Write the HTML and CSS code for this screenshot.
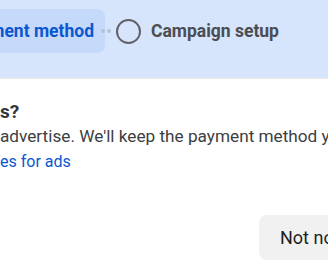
FILE: index.html
```html
<!DOCTYPE html>
<html lang="en">
<head>
<meta charset="utf-8">
<title>Payment setup</title>
<link rel="stylesheet" href="styles.css">
</head>
<body>
  <header class="header">
    <div class="stepper">
      <div class="step step-active">
        <span class="step-label">Payment method</span>
      </div>
      <div class="connector"><span class="dot"></span><span class="dot"></span></div>
      <div class="step">
        <span class="step-circle"></span>
        <span class="step-label step-label-muted">Campaign setup</span>
      </div>
    </div>
  </header>
  <main class="content">
    <h2 class="title">s?</h2>
    <p class="text">advertise. We'll keep the payment method you</p>
    <a class="link" href="#">es for ads</a>
    <div class="actions">
      <button class="btn" type="button">Not now</button>
    </div>
  </main>
</body>
</html>
```
FILE: styles.css
```css
html, body {
  margin: 0;
  padding: 0;
  overflow: hidden;
  background: #ffffff;
  font-family: Roboto, "Noto Sans", Arial, sans-serif;
}

.header {
  height: 78px;
  background: #d6e4fc;
  box-shadow: 0 1px 1px rgba(0, 0, 0, 0.08);
  box-sizing: border-box;
  padding-top: 9px;
}

.stepper {
  display: flex;
  align-items: center;
  margin-left: -56px;
  white-space: nowrap;
}

.step {
  display: flex;
  align-items: center;
  height: 44px;
}

.step-active {
  background: #c5d9fb;
  border-radius: 8px;
  padding: 0 11px 0 16px;
}

.step-label {
  font-size: 17.5px;
  font-weight: 700;
  color: #0b57d0;
}

.step-label-muted {
  color: #4a4d52;
  margin-left: 10px;
}

.connector {
  display: flex;
  gap: 2px;
  margin-left: -4px;
  margin-right: 5px;
}

.dot {
  width: 4px;
  height: 4px;
  border-radius: 50%;
  background: #b6c2d6;
}

.step-circle {
  width: 21px;
  height: 21px;
  border: 2px solid #5f6368;
  border-radius: 50%;
}

.content {
  padding-top: 22px;
}

.title {
  margin: 0;
  font-size: 19px;
  line-height: 24px;
  font-weight: 700;
  color: #333538;
}

.text {
  margin: 0;
  font-size: 17.2px;
  line-height: 25px;
  color: #3c4043;
  white-space: nowrap;
}

.link {
  display: block;
  font-size: 16px;
  line-height: 25px;
  color: #0b57d0;
  text-decoration: none;
}

.actions {
  display: flex;
  padding-top: 41px;
  padding-left: 259px;
}

.btn {
  flex: none;
  height: 45px;
  padding: 0 21px;
  border: none;
  border-radius: 8px;
  background: #f1f1f1;
  font-family: Roboto, "Noto Sans", Arial, sans-serif;
  font-size: 18px;
  color: #1f1f1f;
  white-space: nowrap;
}
```
